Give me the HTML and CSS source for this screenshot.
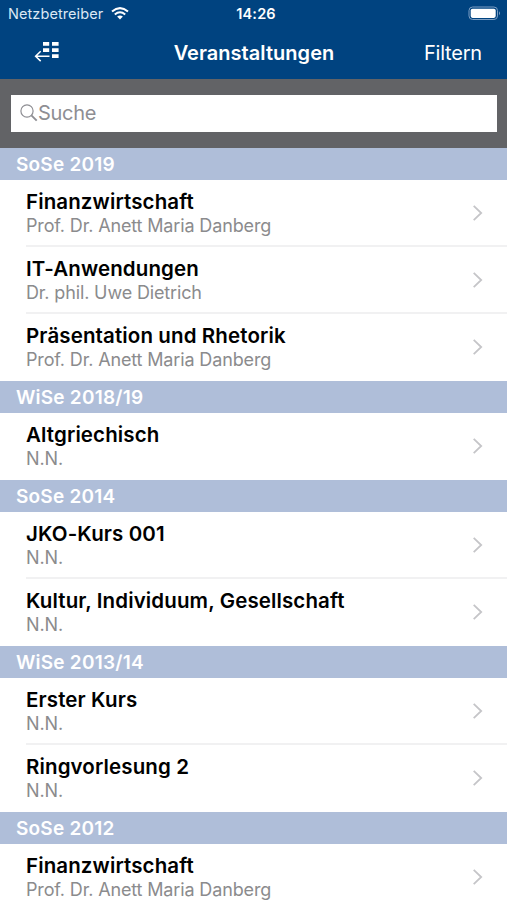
FILE: index.html
```html
<!DOCTYPE html>
<html lang="de">
<head>
<meta charset="utf-8">
<meta name="viewport" content="width=device-width, initial-scale=1">
<title>Veranstaltungen</title>
<link rel="stylesheet" href="styles.css">
</head>
<body>
<svg class="defs" aria-hidden="true"><symbol id="chevron" viewBox="0 0 12 18"><path d="M1.7 1.8 9.2 9 1.7 16.2" fill="none" stroke="currentColor" stroke-width="1.8"/></symbol></svg>
<header class="top">
  <div class="status">
    <div class="carrier"><span>Netzbetreiber</span>
      <svg class="wifi" width="18" height="13" viewBox="0 0 18 13"><g fill="none" stroke="#fff" stroke-width="2"><path d="M1 4.6Q9-2.3 17 4.6"/><path d="M3.8 7.5Q9 3.1 14.2 7.5"/></g><path d="M6.1 9.6Q9 7.2 11.9 9.6L9 12.5Z" fill="#fff"/></svg>
    </div>
    <span class="time">14:26</span>
    <svg class="battery" width="34" height="15" viewBox="0 0 34 15"><rect x="1" y="1" width="28.5" height="12.5" rx="3.6" fill="none" stroke="#7d9fc4"/><rect x="2.7" y="2.7" width="25" height="9.2" rx="1.8" fill="#fff"/><path d="M31 5.2Q33 7.2 31 9.3Z" fill="#7d9fc4"/></svg>
  </div>
  <nav class="nav">
    <svg class="back" width="26" height="22" viewBox="0 0 26 22"><path d="M9 1h6.2v3.8H9zM18 1h6.6v3.8H18zM9 7.3h6.2v3.6H9zM18 7.3h6.6v3.6H18zM18 13.2h6.6V17H18z" fill="#fff"/><path d="M15.5 15.2H1.8M6.7 10.3 1.6 15.2l5.1 4.9" fill="none" stroke="#fff" stroke-width="1.5"/></svg>
    <h1>Veranstaltungen</h1>
    <span class="filter">Filtern</span>
  </nav>
</header>
<div class="search"><div class="field">
  <svg width="18" height="18" viewBox="0 0 18 18"><g fill="none" stroke="#8e8e93"><circle cx="7" cy="7" r="6.1" stroke-width="1.2"/><path d="m11.4 11.4 5.3 5.2" stroke-width="1.9"/></g></svg><span>Suche</span>
</div></div>
<main>
  <section><h2>SoSe 2019</h2><ul>
    <li><div><h3>Finanzwirtschaft</h3><p>Prof. Dr. Anett Maria Danberg</p></div><svg class="chev"><use href="#chevron"/></svg></li>
    <li><div><h3>IT-Anwendungen</h3><p>Dr. phil. Uwe Dietrich</p></div><svg class="chev"><use href="#chevron"/></svg></li>
    <li><div><h3>Präsentation und Rhetorik</h3><p>Prof. Dr. Anett Maria Danberg</p></div><svg class="chev"><use href="#chevron"/></svg></li>
  </ul></section>
  <section><h2>WiSe 2018/19</h2><ul>
    <li><div><h3>Altgriechisch</h3><p>N.N.</p></div><svg class="chev"><use href="#chevron"/></svg></li>
  </ul></section>
  <section><h2>SoSe 2014</h2><ul>
    <li><div><h3>JKO-Kurs 001</h3><p>N.N.</p></div><svg class="chev"><use href="#chevron"/></svg></li>
    <li><div><h3>Kultur, Individuum, Gesellschaft</h3><p>N.N.</p></div><svg class="chev"><use href="#chevron"/></svg></li>
  </ul></section>
  <section><h2>WiSe 2013/14</h2><ul>
    <li><div><h3>Erster Kurs</h3><p>N.N.</p></div><svg class="chev"><use href="#chevron"/></svg></li>
    <li><div><h3>Ringvorlesung 2</h3><p>N.N.</p></div><svg class="chev"><use href="#chevron"/></svg></li>
  </ul></section>
  <section><h2>SoSe 2012</h2><ul>
    <li><div><h3>Finanzwirtschaft</h3><p>Prof. Dr. Anett Maria Danberg</p></div><svg class="chev"><use href="#chevron"/></svg></li>
  </ul></section>
</main>
</body>
</html>
```
FILE: styles.css
```css
* { box-sizing: border-box; margin: 0; padding: 0; }
body { height: 900px; overflow: hidden; background: #fff; font-family: Inter, "Liberation Sans", sans-serif; }
.defs { display: none; }
svg { display: block; flex: none; }
.top { height: 79px; background: #004380; color: #fff; }
.status { height: 27px; display: grid; grid-template-columns: 1fr auto 1fr; align-items: center; padding: 0 5px 0 8px; }
.carrier { display: flex; align-items: center; gap: 8px; font-size: 14.5px; letter-spacing: 0.08px; color: #dce8f4; }
.time { font-size: 14.5px; font-weight: 600; letter-spacing: 0.2px; margin-left: 2px; }
.battery { justify-self: end; }
.nav { height: 52px; display: grid; grid-template-columns: 1fr auto 1fr; align-items: center; padding: 0 25px 2px 34px; }
.back { margin-top: -1px; }
.nav h1 { font-size: 20px; font-weight: 600; line-height: 26px; letter-spacing: 0.05px; margin: 1px 8px 0 0; }
.filter { justify-self: end; font-size: 20px; line-height: 26px; letter-spacing: -0.2px; margin-top: 1px; }
.search { height: 69px; background: #626366; padding: 16px 10px 16px 11px; }
.field { height: 37px; background: #fff; display: flex; align-items: center; padding: 0 0 2px 9px; color: #8e8e93; font-size: 20px; letter-spacing: -0.3px; }
h2 { height: 32px; background: #afbed9; color: #fff; font-size: 19px; font-weight: 600; line-height: 33px; letter-spacing: 0.22px; padding-left: 16px; }
ul { list-style: none; padding-left: 26px; }
li { height: 67px; display: flex; justify-content: space-between; padding: 10px 23px 0 0; border-bottom: 2px solid #f1f1f2; }
li:last-child { border-bottom: 0; }
h3 { font-size: 20.5px; font-weight: 600; line-height: 24px; margin-bottom: 1px; letter-spacing: 0.12px; color: #000; }
p { font-size: 18px; line-height: 22px; letter-spacing: -0.14px; color: #8b8b8d; }
.chev { width: 12px; height: 18px; color: #c5c5c8; margin-top: 14px; }
```
